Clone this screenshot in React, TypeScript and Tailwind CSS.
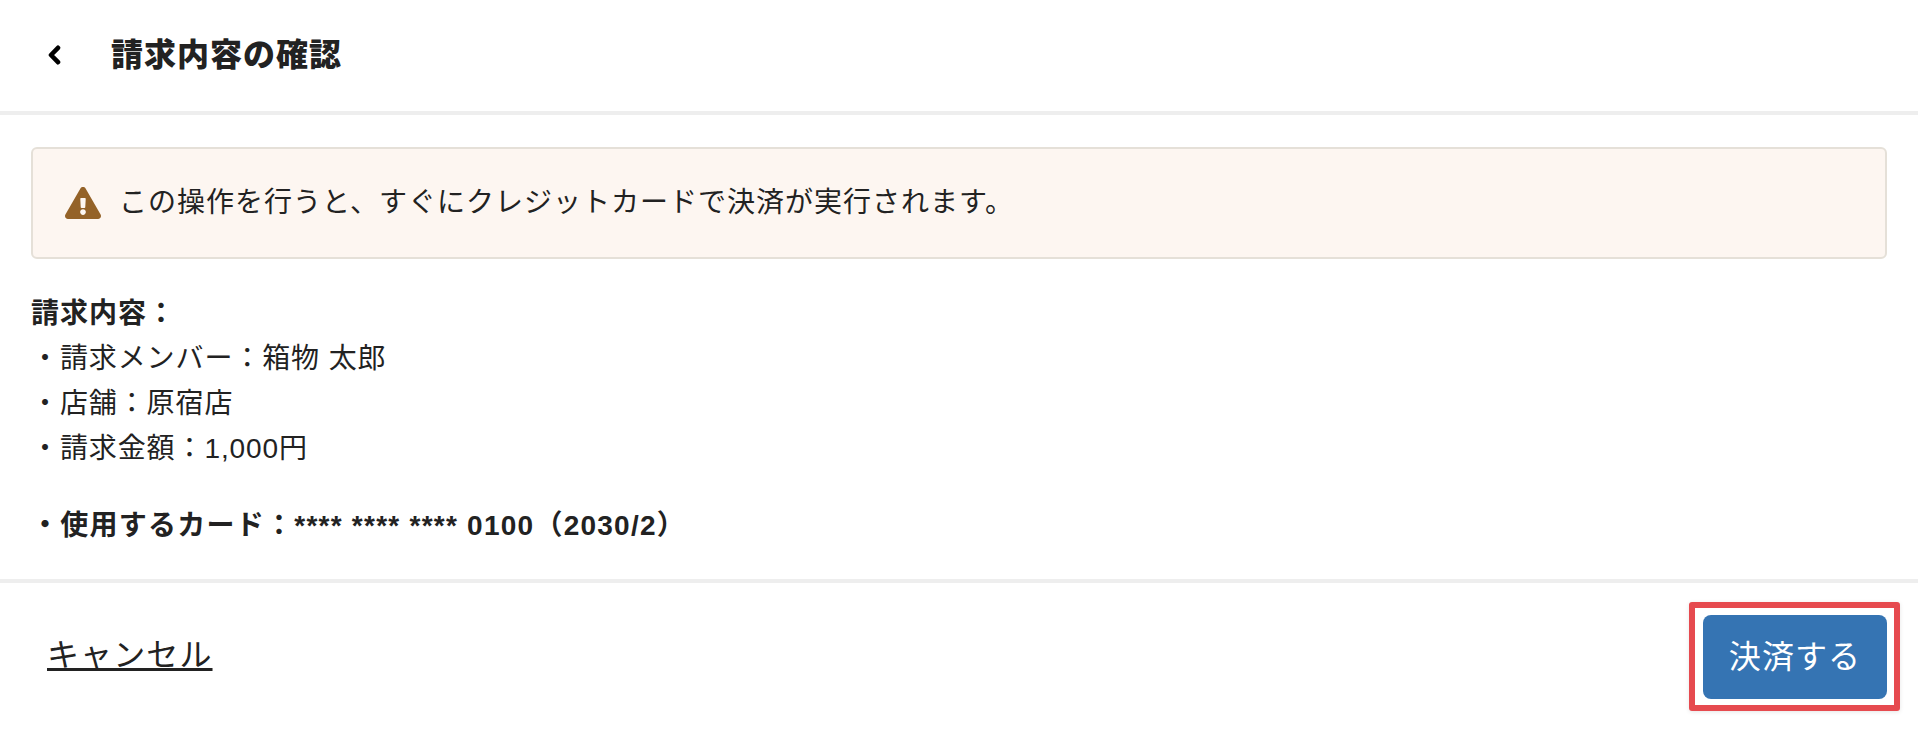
import { FaExclamationTriangle } from "react-icons/fa";

const details = ["請求メンバー：箱物 太郎", "店舗：原宿店", "請求金額：1,000円"];

export default function App() {
  return (
    <div className="relative h-[730px] w-full overflow-hidden bg-white font-['Liberation_Sans','Noto_Sans_CJK_JP',sans-serif] tracking-[1px] text-[#222222]">
      <header className="flex h-[115px] items-center border-b-[4px] border-[#eeeeee] pb-[1px] pl-[47px]">
        <svg viewBox="0 0 14 20" className="h-[20px] w-[14px] text-black">
          <path d="M11 2.800 4 10l7 7.200" fill="none" stroke="currentColor" strokeWidth="4.600" strokeLinejoin="round" strokeLinecap="round" />
        </svg>
        <h1 className="ml-[50px] text-[32px] leading-none font-black">請求内容の確認</h1>
      </header>

      <main className="h-[464px] px-[31px] pt-[32px]">
        <div className="flex h-[112px] items-center rounded-[6px] border-2 border-[#e5e0d8] bg-[#fdf6f1] pl-[32px] text-[28px]">
          <FaExclamationTriangle className="h-[32px] w-[36px] text-[#946228]" />
          <span className="ml-[18px]">この操作を行うと、すぐにクレジットカードで決済が実行されます。</span>
        </div>

        <div className="mt-[32px] text-[28px] leading-[45px]">
          <p className="font-bold">請求内容：</p>
          {details.map((d) => (
            <p key={d} className="tracking-[0.9px]">・{d}</p>
          ))}
          <p className="mt-[32px] font-bold tracking-[1.25px]">・使用するカード：**** **** **** 0100（2030/2）</p>
        </div>
      </main>

      <footer className="flex h-[147px] items-start justify-between border-t-[4px] border-[#eeeeee] pt-[32px] pr-[31px] pl-[47px]">
        <a href="#cancel" className="mt-[16px] text-[32px] leading-[48px] tracking-[1.1px] underline">キャンセル</a>
        <button className="h-[84px] w-[184px] rounded-[8px] bg-[#3574b3] text-[32px] tracking-[1.1px] text-white">決済する</button>
      </footer>

      {/* annotation box over the pay button */}
      <div className="absolute top-[602px] left-[1689px] h-[109px] w-[211px] rounded-[3px] border-[6px] border-[#e64a4f] shadow-[0_1px_4px_rgba(0,0,0,0.1)]" />
    </div>
  );
}
